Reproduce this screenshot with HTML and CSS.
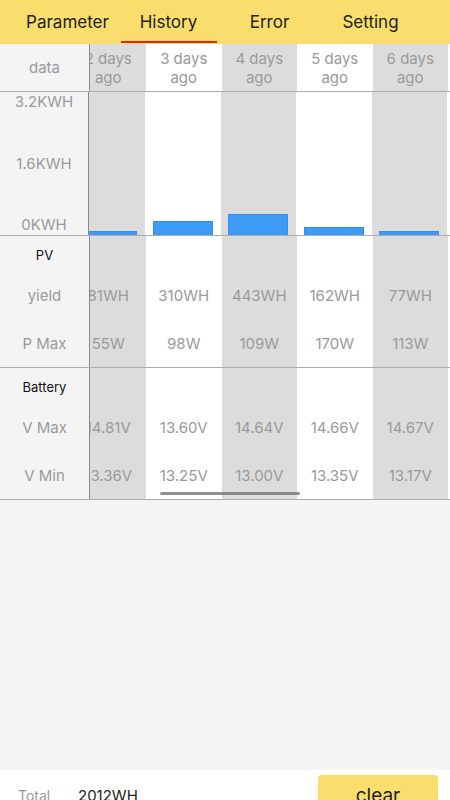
FILE: index.html
```html
<!DOCTYPE html>
<html lang="en">
<head>
    <meta charset="UTF-8">
    <meta name="viewport" content="width=device-width, initial-scale=1.0">
    <title>History</title>
    <link rel="stylesheet" href="styles.css">
</head>
<body>
    <!-- Tabs -->
    <nav class="tabs">
        <a class="tab">Parameter</a>
        <a class="tab active">History</a>
        <a class="tab">Error</a>
        <a class="tab">Setting</a>
    </nav>

    <!-- History table -->
    <section class="table">
        <div class="group">
            <div class="row head">
                <div class="label">data</div>
                <div class="cells"><div class="track">
                    <div class="cell">2 days<br>ago</div>
                    <div class="cell">3 days<br>ago</div>
                    <div class="cell">4 days<br>ago</div>
                    <div class="cell">5 days<br>ago</div>
                    <div class="cell">6 days<br>ago</div>
                    <div class="cell">7 days<br>ago</div>
                </div></div>
            </div>
        </div>

        <div class="group">
            <div class="row chart">
                <div class="label axis">
                    <span>3.2KWH</span>
                    <span>1.6KWH</span>
                    <span>0KWH</span>
                </div>
                <div class="cells"><div class="track">
                    <div class="cell"><div class="bar" style="height: 4px"></div></div>
                    <div class="cell"><div class="bar" style="height: 14px"></div></div>
                    <div class="cell"><div class="bar" style="height: 21px"></div></div>
                    <div class="cell"><div class="bar" style="height: 8px"></div></div>
                    <div class="cell"><div class="bar" style="height: 4px"></div></div>
                    <div class="cell"><div class="bar" style="height: 4px"></div></div>
                </div></div>
            </div>
        </div>

        <div class="group">
            <div class="row title">
                <div class="label">PV</div>
                <div class="cells"><div class="track">
                    <div class="cell"></div><div class="cell"></div><div class="cell"></div>
                    <div class="cell"></div><div class="cell"></div><div class="cell"></div>
                </div></div>
            </div>
            <div class="row">
                <div class="label">yield</div>
                <div class="cells"><div class="track">
                    <div class="cell">81WH</div>
                    <div class="cell">310WH</div>
                    <div class="cell">443WH</div>
                    <div class="cell">162WH</div>
                    <div class="cell">77WH</div>
                    <div class="cell">90WH</div>
                </div></div>
            </div>
            <div class="row">
                <div class="label">P Max</div>
                <div class="cells"><div class="track">
                    <div class="cell">55W</div>
                    <div class="cell">98W</div>
                    <div class="cell">109W</div>
                    <div class="cell">170W</div>
                    <div class="cell">113W</div>
                    <div class="cell">60W</div>
                </div></div>
            </div>
        </div>

        <div class="group">
            <div class="row title">
                <div class="label">Battery</div>
                <div class="cells"><div class="track">
                    <div class="cell"></div><div class="cell"></div><div class="cell"></div>
                    <div class="cell"></div><div class="cell"></div><div class="cell"></div>
                </div></div>
            </div>
            <div class="row">
                <div class="label">V Max</div>
                <div class="cells"><div class="track">
                    <div class="cell">14.81V</div>
                    <div class="cell">13.60V</div>
                    <div class="cell">14.64V</div>
                    <div class="cell">14.66V</div>
                    <div class="cell">14.67V</div>
                    <div class="cell">14.60V</div>
                </div></div>
            </div>
            <div class="row">
                <div class="label">V Min</div>
                <div class="cells"><div class="track">
                    <div class="cell">13.36V</div>
                    <div class="cell">13.25V</div>
                    <div class="cell">13.00V</div>
                    <div class="cell">13.35V</div>
                    <div class="cell">13.17V</div>
                    <div class="cell">13.20V</div>
                </div></div>
            </div>
        </div>

        <!-- horizontal scroll indicator -->
        <div class="scrollbar"></div>
    </section>

    <div class="filler"></div>

    <!-- Footer -->
    <footer class="summary">
        <span class="total-label">Total</span>
        <span class="total-value">2012WH</span>
        <button class="clear">clear</button>
    </footer>
</body>
</html>
```

FILE: styles.css
```css
:root {
    --yellow: #f9de6d;
    --panel: #f4f4f4;
    --shade: #dcdcdc;
    --line: #acacac;
    --muted: #9a9a9a;
    --font-family: 'Inter', 'Noto Sans', sans-serif;
}

html,
body {
    height: 800px;
    overflow: hidden;
}

body {
    margin: 0;
    padding: 0;
    background-color: var(--panel);
    font-family: var(--font-family);
    color: #222;
}

/* Tabs */
.tabs {
    display: flex;
    height: 44px;
    padding-left: 17px;
    background-color: var(--yellow);
}

.tab {
    position: relative;
    width: 101px;
    line-height: 44px;
    text-align: center;
    font-size: 17px;
    color: #222;
}

.tab.active::after {
    content: '';
    position: absolute;
    left: 3px;
    right: 2px;
    bottom: 1px;
    height: 2px;
    background-color: #e5221c;
}

/* Table */
.table {
    position: relative;
}

.group {
    border-bottom: 1px solid var(--line);
}

.row {
    display: flex;
    height: 48px;
}

.row.head {
    height: 47px;
}

.row.chart {
    height: 143px;
}

.row.title {
    height: 35px;
}

.label {
    flex: 0 0 89px;
    display: flex;
    align-items: center;
    justify-content: center;
    border-right: 1px solid #8a8a8a;
    background-color: var(--panel);
    font-size: 15px;
    color: var(--muted);
}

.row.title .label {
    padding-top: 2px;
    font-size: 13px;
    color: #111;
}

.label.axis {
    flex-direction: column;
    justify-content: space-between;
    padding: 1px 0;
    box-sizing: border-box;
    line-height: 18px;
}

.cells {
    flex: 1;
    overflow: hidden;
}

.track {
    display: flex;
    height: 100%;
    margin-left: -19.5px;
}

.cell {
    flex: 0 0 75.5px;
    display: flex;
    align-items: center;
    justify-content: center;
    background-color: white;
    font-size: 15px;
    line-height: 19px;
    text-align: center;
    color: var(--muted);
}

.cell:nth-child(odd) {
    background-color: var(--shade);
}

.row.chart .cell {
    align-items: flex-end;
}

.bar {
    width: 60px;
    box-sizing: border-box;
    border: 1px solid #2f8ef0;
    border-bottom: none;
    background-color: #3d9bf6;
}

.scrollbar {
    position: absolute;
    left: 160px;
    bottom: 5px;
    width: 140px;
    height: 3px;
    border-radius: 2px;
    background-color: rgba(110, 110, 110, 0.75);
}

.filler {
    height: 270px;
}

/* Footer */
.summary {
    display: flex;
    align-items: flex-start;
    height: 50px;
    padding: 5px 12px 0 18px;
    background-color: white;
}

.total-label {
    width: 60px;
    margin-top: 12px;
    font-size: 14px;
    color: var(--muted);
}

.total-value {
    margin-top: 11px;
    font-size: 15px;
    color: #222;
}

.clear {
    margin-left: auto;
    width: 120px;
    height: 40px;
    border: none;
    border-radius: 4px;
    background-color: var(--yellow);
    font-family: var(--font-family);
    font-size: 19px;
    color: #222;
}
```
